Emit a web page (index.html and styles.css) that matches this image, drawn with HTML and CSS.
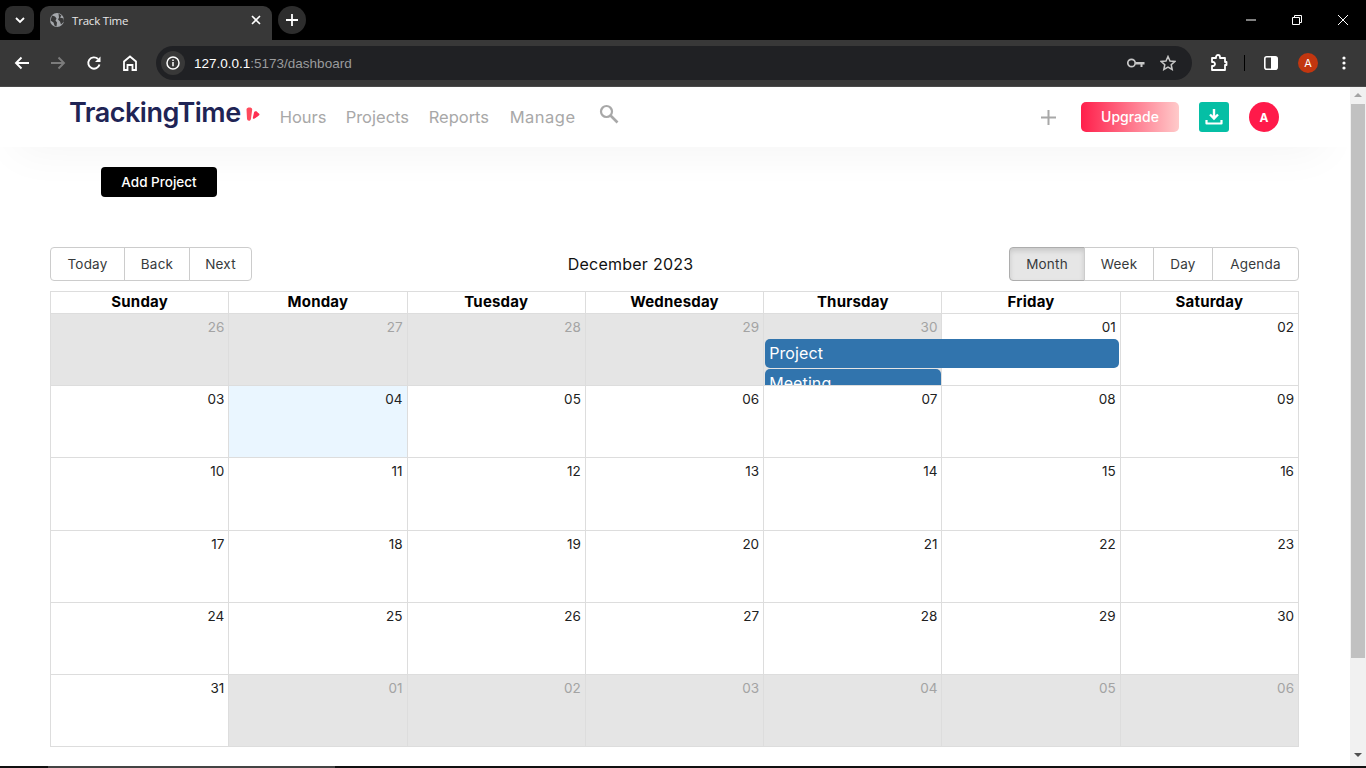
FILE: index.html
```html
<!DOCTYPE html>
<html lang="en">
<head>
    <meta charset="UTF-8">
    <meta name="viewport" content="width=device-width, initial-scale=1.0">
    <title>Track Time</title>
    <link rel="stylesheet" href="styles.css">
</head>
<body>
    <div class="tabstrip">
        <div class="tab-list">
            <svg width="12" height="12" viewBox="0 0 12 12"><path d="M2 4l4 4 4-4" fill="none" stroke="#fff" stroke-width="1.8"/></svg>
        </div>
        <div class="tab">
            <svg class="tab-icon" width="16" height="16" viewBox="0 0 16 16"><circle cx="8" cy="8" r="7" fill="#a5a8ac"/><path d="M3 3.500l3 1 1.500 2-1 2 1.500 2-.5 4-2-1-1-3-3-2zM9.500 1.500l3 2-1.500 2 3.500 1 .5 3-3 3-1-3-2-2 1-2z" fill="#383838"/></svg>
            <span class="tab-title">Track Time</span>
            <svg class="tab-close" width="10" height="10" viewBox="0 0 10 10"><path d="M1 1l8 8M9 1l-8 8" stroke="#fff" stroke-width="1.600"/></svg>
        </div>
        <div class="new-tab">
            <svg width="12" height="12" viewBox="0 0 12 12"><path d="M6 0v12M0 6h12" stroke="#fff" stroke-width="1.800"/></svg>
        </div>
        <div class="win-controls">
            <svg width="10" height="10" viewBox="0 0 10 10"><path d="M0 5h10" stroke="#fff"/></svg>
            <svg width="10" height="10" viewBox="0 0 10 10"><path d="M.5 2.500h7v7h-7zM2.500 2.500v-2h7v7h-2" fill="none" stroke="#fff"/></svg>
            <svg width="10" height="10" viewBox="0 0 10 10"><path d="M0 0l10 10M10 0L0 10" stroke="#fff"/></svg>
        </div>
    </div>

    <div class="toolbar">
        <svg class="tool back" width="16" height="16" viewBox="0 0 16 16"><path d="M15 8H2M7.500 2.500L2 8l5.500 5.500" fill="none" stroke="#fff" stroke-width="1.900"/></svg>
        <svg class="tool forward" width="16" height="16" viewBox="0 0 16 16"><path d="M1 8h13M8.500 2.500L14 8l-5.500 5.500" fill="none" stroke="#7c7c7c" stroke-width="1.900"/></svg>
        <svg class="tool reload" width="16" height="16" viewBox="0 0 16 16"><path d="M13.500 9.500A5.700 5.700 0 1 1 12 4" fill="none" stroke="#fff" stroke-width="1.900"/><path d="M14.500 1.500v5.500H9z" fill="#fff"/></svg>
        <svg class="tool home" width="16" height="16" viewBox="0 0 16 16"><path d="M2 15V6.500L8 1.500l6 5V15h-3.500v-5h-5v5z" fill="none" stroke="#fff" stroke-width="1.800"/></svg>
        <div class="omnibox">
            <div class="site-info">
                <svg width="14" height="14" viewBox="0 0 14 14"><circle cx="7" cy="7" r="6" fill="none" stroke="#fff" stroke-width="1.500"/><path d="M7 6v4.200M7 3.500v1.500" stroke="#fff" stroke-width="1.500"/></svg>
            </div>
            <div class="url"><span class="url-host">127.0.0.1</span>:5173/dashboard</div>
            <svg class="omni-key" width="18" height="12" viewBox="0 0 18 12"><circle cx="4.500" cy="6" r="3.700" fill="none" stroke="#c7c7c7" stroke-width="1.700"/><path d="M8.500 5h9v2.500h-2v2.500h-2V7.500H8.500z" fill="#c7c7c7"/></svg>
            <svg class="omni-star" width="16" height="16" viewBox="0 0 16 16"><path d="M8 1.500l2 4.500 4.800.5-3.600 3.200 1 4.800L8 12.100l-4.200 2.400 1-4.800L1.200 6.500 6 6z" fill="none" stroke="#c7c7c7" stroke-width="1.500"/></svg>
        </div>
        <svg class="tool puzzle" width="18" height="18" viewBox="0 0 18 18"><path d="M2 4h4V3a2 2 0 0 1 4 0v1h5v4h1.500v3H15v5H2v-4h1a2 2 0 0 0 0-4H2z" fill="none" stroke="#fff" stroke-width="1.800" stroke-linejoin="round"/></svg>
        <div class="tool-sep"></div>
        <svg class="tool panel" width="14" height="14" viewBox="0 0 14 14"><rect x=".8" y=".8" width="12.400" height="12.400" rx="2" fill="none" stroke="#fff" stroke-width="1.600"/><path d="M7 1h5a1 1 0 0 1 1 1v10a1 1 0 0 1-1 1H7z" fill="#fff"/></svg>
        <div class="chrome-avatar">A</div>
        <svg class="tool dots" width="4" height="14" viewBox="0 0 4 14"><circle cx="2" cy="2" r="1.600" fill="#fff"/><circle cx="2" cy="7" r="1.600" fill="#fff"/><circle cx="2" cy="12" r="1.600" fill="#fff"/></svg>
    </div>

    <div class="viewport">
        <div class="page">
            <div class="header">
                <div class="logo">
                    <span class="logo-text">TrackingTime</span>
                    <svg class="logo-mark" width="15" height="14" viewBox="0 0 15 14"><path d="M1.500 2.200C1.800 -.2 7.300 -.2 7.200 2.500L6 11.500c-.2 3-3.800 3-4 .3z" fill="#ff4a5c"/><path d="M9 5.500C9.500 3.700 12 3.800 12.500 5.300c.3.900 2 1.300 2 2.200 0 1-4 3.500-5.300 4.200-.9.400-1.600-.3-1.300-1.200z" fill="#ff2f52"/></svg>
                </div>
                <nav class="main-nav">
                    <a class="nav-hours">Hours</a>
                    <a class="nav-projects">Projects</a>
                    <a class="nav-reports">Reports</a>
                    <a class="nav-manage">Manage</a>
                </nav>
                <svg class="search" width="20" height="20" viewBox="0 0 20 20"><circle cx="7.500" cy="7.500" r="5.500" fill="none" stroke="#a8a8a8" stroke-width="2.200"/><path d="M11.500 11.500l7 7" stroke="#a8a8a8" stroke-width="2.600"/></svg>
                <div class="header-right">
                    <svg class="plus" width="15" height="15" viewBox="0 0 15 15"><path d="M7.500 0v15M0 7.500h15" stroke="#a8a8a8" stroke-width="2"/></svg>
                    <button class="upgrade">Upgrade</button>
                    <div class="download">
                        <svg width="18" height="18" viewBox="0 0 18 18"><path d="M9 1v9M5 6.500L9 10.500l4-4" fill="none" stroke="#fff" stroke-width="2.400"/><path d="M1.500 12v3.500h15V12" fill="none" stroke="#fff" stroke-width="2.200" stroke-linejoin="round"/></svg>
                    </div>
                    <div class="avatar">A</div>
                </div>
            </div>

            <div class="content">
                <button class="add-project">Add Project</button>

                <div class="cal-toolbar">
                    <div class="btn-group">
                        <button class="w-today">Today</button>
                        <button class="w-back">Back</button>
                        <button class="w-next">Next</button>
                    </div>
                    <div class="cal-label">December 2023</div>
                    <div class="btn-group">
                        <button class="w-month active">Month</button>
                        <button class="w-week">Week</button>
                        <button class="w-day">Day</button>
                        <button class="w-agenda">Agenda</button>
                    </div>
                </div>

                <div class="calendar">
                    <div class="week-head">
                        <div>Sunday</div><div>Monday</div><div>Tuesday</div><div>Wednesday</div><div>Thursday</div><div>Friday</div><div>Saturday</div>
                    </div>
                    <div class="week">
                        <div class="day off">26</div><div class="day off">27</div><div class="day off">28</div><div class="day off">29</div><div class="day off">30</div><div class="day">01</div><div class="day">02</div>
                        <div class="events">
                            <div class="event event-project">Project</div>
                            <div class="event event-meeting">Meeting</div>
                        </div>
                    </div>
                    <div class="week">
                        <div class="day">03</div><div class="day today">04</div><div class="day">05</div><div class="day">06</div><div class="day">07</div><div class="day">08</div><div class="day">09</div>
                    </div>
                    <div class="week">
                        <div class="day">10</div><div class="day">11</div><div class="day">12</div><div class="day">13</div><div class="day">14</div><div class="day">15</div><div class="day">16</div>
                    </div>
                    <div class="week">
                        <div class="day">17</div><div class="day">18</div><div class="day">19</div><div class="day">20</div><div class="day">21</div><div class="day">22</div><div class="day">23</div>
                    </div>
                    <div class="week">
                        <div class="day">24</div><div class="day">25</div><div class="day">26</div><div class="day">27</div><div class="day">28</div><div class="day">29</div><div class="day">30</div>
                    </div>
                    <div class="week">
                        <div class="day">31</div><div class="day off">01</div><div class="day off">02</div><div class="day off">03</div><div class="day off">04</div><div class="day off">05</div><div class="day off">06</div>
                    </div>
                </div>
            </div>
        </div>
        <div class="scrollbar">
            <div class="arrow-up"></div>
            <div class="thumb"></div>
            <div class="arrow-down"></div>
        </div>
    </div>

    <div class="taskbar"><div class="taskbar-item"></div></div>
</body>
</html>
```

FILE: styles.css
```css
* {
    box-sizing: border-box;
}

html, body {
    height: 768px;
    overflow: hidden;
}

body {
    margin: 0;
    font-family: Inter, "Noto Sans", sans-serif;
    background-color: #fff;
    display: flex;
    flex-direction: column;
}

/* browser chrome */
.tabstrip {
    height: 40px;
    background-color: #000;
    display: flex;
    align-items: flex-end;
    flex-shrink: 0;
    font-family: "Open Sans", sans-serif;
}

.tab-list {
    width: 29px;
    height: 28px;
    margin: 0 0 6px 5px;
    background-color: #2d2d2d;
    border-radius: 8px;
    display: flex;
    align-items: center;
    justify-content: center;
}

.tab {
    width: 232px;
    height: 34px;
    margin-left: 6px;
    padding: 0 11px 6px 9px;
    background-color: #383838;
    border-radius: 9px 9px 0 0;
    display: flex;
    align-items: center;
    color: #e8e8e8;
    font-size: 11.500px;
    letter-spacing: -0.2px;
}

.tab-title {
    margin-left: 7px;
    flex: 1;
}

.new-tab {
    width: 28px;
    height: 28px;
    margin: 0 0 6px 6px;
    background-color: #2d2d2d;
    border-radius: 50%;
    display: flex;
    align-items: center;
    justify-content: center;
}

.win-controls {
    margin-left: auto;
    height: 40px;
    width: 120px;
    padding-right: 18px;
    display: flex;
    align-items: center;
    justify-content: space-between;
}

.toolbar {
    height: 47px;
    background-color: #383838;
    border-bottom: 1px solid #4a4a4a;
    display: flex;
    align-items: center;
    flex-shrink: 0;
    padding-left: 14px;
    padding-bottom: 1px;
}

.forward {
    margin-left: 20px;
}

.reload {
    margin-left: 20px;
}

.home {
    margin-left: 20px;
}

.omnibox {
    width: 1036px;
    height: 34px;
    margin-left: 18px;
    padding: 0 16px 0 5px;
    background-color: #202124;
    border-radius: 17px;
    display: flex;
    align-items: center;
}

.site-info {
    width: 24px;
    height: 24px;
    background-color: #383838;
    border-radius: 50%;
    display: flex;
    align-items: center;
    justify-content: center;
}

.url {
    margin-left: 9px;
    padding-top: 1px;
    flex: 1;
    color: #9a9b9d;
    font-family: "Liberation Sans", sans-serif;
    font-size: 13.500px;
}

.url-host {
    color: #fff;
}

.omni-key {
    margin-right: 15px;
}

.puzzle {
    margin-left: 18px;
}

.tool-sep {
    width: 1px;
    height: 16px;
    margin-left: 16px;
    background-color: #000;
}

.panel {
    margin-left: 19px;
}

.chrome-avatar {
    width: 20px;
    height: 20px;
    margin-left: 20px;
    background-color: #c2360f;
    border-radius: 50%;
    color: #fff;
    font-size: 11px;
    display: flex;
    align-items: center;
    justify-content: center;
}

.dots {
    margin-left: 24px;
}

/* page */
.viewport {
    height: 679px;
    display: flex;
    flex-shrink: 0;
}

.page {
    width: 1350px;
    position: relative;
    z-index: 0;
    overflow: hidden;
    background-color: #fff;
}

.header {
    height: 60px;
    background-color: #fff;
    display: flex;
    align-items: flex-start;
    padding-left: 69px;
}

/* soft shadow under the header, shorter than the page on both sides */
.header::before {
    content: "";
    position: absolute;
    z-index: -1;
    top: 0;
    left: 15px;
    right: 25px;
    height: 60px;
    box-shadow: 0 6px 44px rgba(0, 0, 0, 0.045);
}

.logo {
    display: flex;
    align-items: center;
    height: 50px;
}

.logo-text {
    color: #1f2455;
    font-size: 27px;
    font-weight: 600;
    letter-spacing: -0.5px;
}

.logo-mark {
    margin-left: 4px;
    margin-top: 4px;
}

.main-nav {
    display: flex;
    margin-left: 20px;
    padding-top: 19px;
}

.main-nav a {
    color: #a8a8a8;
    font-size: 16.500px;
    line-height: 22px;
}

.nav-hours {
    width: 66px;
}

.nav-projects {
    width: 83px;
}

.nav-reports {
    width: 81px;
}

.nav-manage {
    width: 89px;
    letter-spacing: 0.5px;
}

.search {
    margin-top: 17px;
}

.header-right {
    margin-left: auto;
    margin-right: 71px;
    display: flex;
    align-items: center;
    height: 60px;
}

.upgrade {
    width: 98px;
    height: 30px;
    margin-left: 25px;
    padding-bottom: 2px;
    border: none;
    border-radius: 5px;
    background: linear-gradient(90deg, #ff1f4b, #ffcaca);
    color: #fff;
    font-family: inherit;
    font-size: 14px;
    font-weight: 500;
}

.download {
    width: 30px;
    height: 30px;
    margin-left: 20px;
    margin-top: -1px;
    background-color: #05bfa5;
    border-radius: 3px;
    display: flex;
    align-items: center;
    justify-content: center;
}

.avatar {
    width: 30px;
    height: 30px;
    margin-left: 20px;
    background-color: #ff1a4a;
    border-radius: 50%;
    color: #fff;
    font-size: 12px;
    font-weight: 700;
    display: flex;
    align-items: center;
    justify-content: center;
}

.content {
    height: 619px;
    padding: 20px 51px 0 50px;
}

.add-project {
    display: block;
    width: 116px;
    height: 30px;
    margin-left: 51px;
    border: none;
    border-radius: 4px;
    background-color: #000;
    color: #fff;
    font-family: inherit;
    font-size: 13.500px;
    font-weight: 500;
}

.cal-toolbar {
    display: flex;
    align-items: center;
    justify-content: space-between;
    margin-top: 50px;
}

.btn-group {
    display: flex;
}

.btn-group button {
    height: 34px;
    padding: 0;
    margin-left: -1px;
    background-color: #fff;
    border: 1px solid #ccc;
    color: #373a3c;
    font-family: inherit;
    font-size: 13.500px;
    letter-spacing: 0.2px;
}

.btn-group button:first-child {
    margin-left: 0;
    border-radius: 4px 0 0 4px;
}

.btn-group button:last-child {
    border-radius: 0 4px 4px 0;
}

.btn-group .active {
    background-color: #e6e6e6;
    border-color: #adadad;
    box-shadow: inset 0 3px 5px rgba(0, 0, 0, 0.125);
}

.w-today { width: 75px; }
.w-back { width: 66px; }
.w-next { width: 63px; }
.w-month { width: 76px; }
.w-week { width: 70px; }
.w-day { width: 60px; }
.w-agenda { width: 87px; }

.cal-label {
    color: #111;
    font-size: 16px;
    letter-spacing: 0.25px;
}

.calendar {
    margin-top: 10px;
    height: 456px;
    border: 1px solid #ddd;
    border-left: none;
    display: flex;
    flex-direction: column;
}

.week-head {
    height: 21px;
    display: grid;
    grid-template-columns: repeat(7, 1fr);
    flex-shrink: 0;
}

.week-head div {
    border-left: 1px solid #ddd;
    color: #000;
    font-size: 15px;
    font-weight: 700;
    letter-spacing: 0.2px;
    line-height: 20px;
    text-align: center;
}

.week {
    flex: 1;
    position: relative;
    overflow: hidden;
    display: grid;
    grid-template-columns: repeat(7, 1fr);
    border-top: 1px solid #ddd;
}

.day {
    border-left: 1px solid #ddd;
    padding: 5px 4px 0 0;
    color: #212121;
    font-size: 13.500px;
    line-height: 17px;
    text-align: right;
}

.off {
    background-color: #e5e5e5;
    color: #a3a3a3;
}

.today {
    background-color: #eaf6ff;
}

.events {
    position: absolute;
    top: 25px;
    left: 0;
    right: 0;
    display: grid;
    grid-template-columns: repeat(7, 1fr);
    row-gap: 1px;
}

.event {
    height: 29px;
    margin: 0 1px 0 2px;
    padding: 0 5px 0 4px;
    background-color: #3174ad;
    border-radius: 5px;
    color: #fff;
    font-size: 16px;
    letter-spacing: 0.1px;
    line-height: 28px;
}

.event-project {
    grid-row: 1;
    grid-column: 5 / span 2;
}

.event-meeting {
    grid-row: 2;
    grid-column: 5;
    margin-right: 0;
}

/* scrollbar */
.scrollbar {
    width: 16px;
    height: 679px;
    background-color: #f1f1f1;
    display: flex;
    flex-direction: column;
    align-items: center;
}

.arrow-up {
    margin-top: 6px;
    border-left: 4px solid transparent;
    border-right: 4px solid transparent;
    border-bottom: 4px solid #a3a3a3;
}

.thumb {
    width: 14px;
    height: 554px;
    margin-top: 7px;
    background-color: #c1c1c1;
}

.arrow-down {
    margin-top: 95px;
    border-left: 4px solid transparent;
    border-right: 4px solid transparent;
    border-top: 4px solid #505050;
}

.taskbar {
    height: 2px;
    background-color: #111;
    flex-shrink: 0;
}

.taskbar-item {
    width: 287px;
    height: 2px;
    margin-left: 48px;
    background-color: #444;
}
```
